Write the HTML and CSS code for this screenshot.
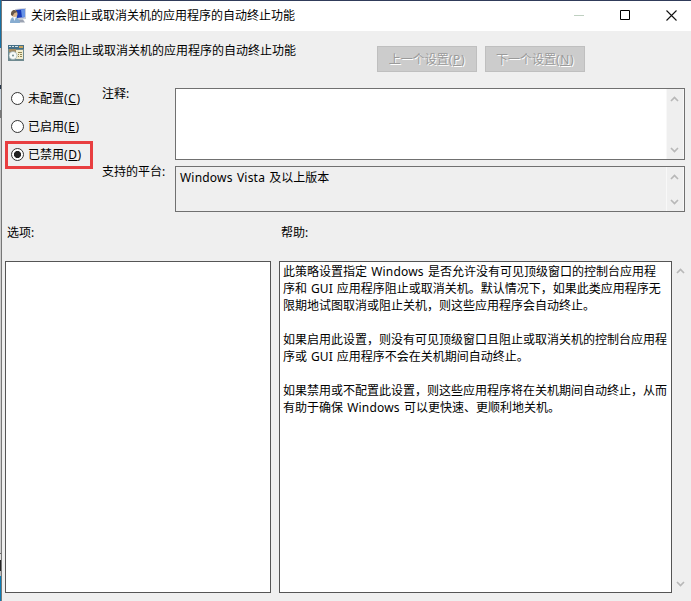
FILE: index.html
```html
<!DOCTYPE html>
<html lang="zh-CN">
<head>
<meta charset="utf-8">
<title>关闭会阻止或取消关机的应用程序的自动终止功能</title>
<link rel="stylesheet" href="styles.css">
</head>
<body>
<svg width="0" height="0" class="defs">
  <symbol id="up" viewBox="0 0 9 6"><path d="M1 5L4.500 1.500L8 5" fill="none" stroke="currentColor" stroke-width="1.700"/></symbol>
  <symbol id="down" viewBox="0 0 9 6"><path d="M1 1L4.500 4.500L8 1" fill="none" stroke="currentColor" stroke-width="1.700"/></symbol>
</svg>
<div class="screen">
  <div class="desktop-edge"></div>
  <main class="window">
    <header class="titlebar">
      <svg class="app-icon" width="18" height="16" viewBox="0 0 18 16">
        <path d="M5 1l11-1v11l-10 1z" fill="#c9cdd8"/>
        <path d="M6 2l9-1v8l-8 1z" fill="#1739b8"/>
        <path d="M11 1.500l4-.5v8l-3 .4z" fill="#6793e6"/>
        <path d="M9 11.500h4l2 3H9z" fill="#9ba3b2"/>
        <path d="M0 15c0-4 2-6 4-6s6 2 6 6z" fill="#87acd0"/>
        <path d="M3 9l1.500 4L6 9z" fill="#f2f5fa"/>
        <circle cx="4.500" cy="6" r="3" fill="#d9b58c"/>
        <path d="M1 7c-.5-6 5-6 6.500-3L4.500 5 2.500 8z" fill="#67574a"/>
      </svg>
      <h1 class="title">关闭会阻止或取消关机的应用程序的自动终止功能</h1>
      <div class="controls">
        <svg width="11" height="11" viewBox="0 0 11 11"><path d="M0 5.500h10" stroke="#bfd0c1"/></svg>
        <svg width="11" height="11" viewBox="0 0 11 11"><path d="M.5 .5h9v9h-9z" fill="none" stroke="#000"/></svg>
        <svg width="11" height="11" viewBox="0 0 11 11"><path d="M.5 .5l10 10M10.500 .5l-10 10" stroke="#111" stroke-width="1.100"/></svg>
      </div>
    </header>
    <section class="heading">
      <svg class="policy-icon" width="16" height="16" viewBox="0 0 16 16">
        <path d="M0 0h16v16H0z" fill="#6f8a90"/>
        <path d="M0 0h16v4H0z" fill="#456f86"/>
        <path d="M1 1.500h2m1 0h2m1 0h3" stroke="#d6e3e8"/>
        <path d="M11 1h4v2h-4z" fill="#c9a55c"/>
        <path d="M1 4h7v3H1z" fill="#a58c62"/>
        <path d="M8 5h7v9H8z" fill="#f3edcf"/>
        <path d="M10 7.500h4M10 9.500h1m1 0h2M10 11.500h1m1 0h2" stroke="#8d8452"/>
        <circle cx="5" cy="10.500" r="4" fill="#f7faf8" stroke="#8fa3a6" stroke-width=".6"/>
        <circle cx="5" cy="10.500" r="1" fill="#738d91"/>
      </svg>
      <h2 class="policy-name">关闭会阻止或取消关机的应用程序的自动终止功能</h2>
      <div class="nav">
        <button class="nav-button" disabled>上一个设置<span class="key">(<u>P</u>)</span></button>
        <button class="nav-button" disabled>下一个设置<span class="key">(<u>N</u>)</span></button>
      </div>
    </section>
    <section class="settings">
      <div class="choices">
        <label class="choice"><span class="radio"></span><span>未配置<span class="key">(<u>C</u>)</span></span></label>
        <label class="choice"><span class="radio"></span><span>已启用<span class="key">(<u>E</u>)</span></span></label>
        <label class="choice marked"><span class="radio checked"></span><span>已禁用<span class="key">(<u>D</u>)</span></span></label>
      </div>
      <div class="fields">
        <div class="field-label">注释:</div>
        <div class="box comment"><div class="box-text"></div><div class="scroll"><svg class="arrow"><use href="#up"/></svg><svg class="arrow"><use href="#down"/></svg></div></div>
        <div class="field-label">支持的平台:</div>
        <div class="box platform"><div class="box-text"><span class="latin">Windows Vista</span> 及以上版本</div><div class="scroll"><svg class="arrow"><use href="#up"/></svg><svg class="arrow"><use href="#down"/></svg></div></div>
      </div>
    </section>
    <section class="panes">
      <div class="pane-label">选项:</div>
      <div class="pane-label help-label">帮助:</div>
      <div></div>
      <div class="pane"></div>
      <div class="pane help"><p>此策略设置指定 <span class="latin">Windows</span> 是否允许没有可见顶级窗口的控制台应用程<br>序和 GUI 应用程序阻止或取消关机。默认情况下，如果此类应用程序无<br>限期地试图取消或阻止关机，则这些应用程序会自动终止。</p><p>如果启用此设置，则没有可见顶级窗口且阻止或取消关机的控制台应用程<br>序或 GUI 应用程序不会在关机期间自动终止。</p><p>如果禁用或不配置此设置，则这些应用程序将在关机期间自动终止，从而<br>有助于确保 <span class="latin">Windows</span> 可以更快速、更顺利地关机。</p></div>
      <div class="scroll outer"><svg class="arrow"><use href="#up"/></svg><svg class="arrow"><use href="#down"/></svg></div>
    </section>
  </main>
</div>
</body>
</html>
```
FILE: styles.css
```css
* { box-sizing: border-box; }
body {
  margin: 0;
  overflow: hidden;
  font: 12px/17px "Noto Sans", "Noto Sans CJK SC", sans-serif;
  color: #000;
}
h1, h2, p { margin: 0; font: inherit; }
svg { display: block; flex: none; }
.defs { display: none; }
u { text-underline-offset: 1px; text-decoration-thickness: 1px; }
.key { letter-spacing: .6px; }
.latin { letter-spacing: .2px; }
.screen {
  display: grid;
  grid-template-columns: 1px 690px;
  height: 601px;
}
.desktop-edge {
  background: linear-gradient(#1671a5 0 48px, #cfcfcf 48px 85px, #26364a 85px 89px, #c2cdd6 89px 110px, #777 110px 118px, #cfcfcf 118px 553px, #666 553px 554px, #ddd 554px 560px, #222 560px 571px, #bbb 571px 576px, #087bb4 576px);
}
.window {
  border-top: 1px solid #303b5a;
  border-left: 1px solid #777;
  background: #efefef;
}
.titlebar {
  display: flex;
  align-items: center;
  height: 30px;
  padding: 0 14px 0 8px;
  background: #fff;
}
.title { margin: -1px 0 0 3px; }
.controls {
  display: flex;
  gap: 35px;
  margin: -1px 0 0 auto;
}
.heading {
  display: flex;
  align-items: flex-start;
  height: 57px;
  padding: 14px 0 0 6px;
}
.policy-name { margin: -3px 0 0 8px; }
.nav {
  display: flex;
  gap: 8px;
  margin: 1px 106px 0 auto;
}
.nav-button {
  width: 100px;
  height: 26px;
  padding: 0;
  border: 1px solid #bfbfbf;
  background: #ccc;
  color: #9a9a9a;
  font: inherit;
  text-shadow: 1px 1px 0 #fff;
}
.settings {
  display: grid;
  grid-template-columns: 100px 583px;
  height: 124px;
}
.choices { margin-top: -4px; padding: 1px 0 0 3px; }
.choice {
  display: flex;
  align-items: center;
  gap: 4px;
  width: 88px;
  height: 28px;
  padding: 0 0 2px 6px;
}
.radio {
  flex: none;
  width: 13px;
  height: 13px;
  border: 1px solid #333;
  border-radius: 50%;
  background: #fff;
}
.checked { background: radial-gradient(circle, #222 0 3.200px, #fff 3.900px); }
.marked {
  padding-left: 3px;
  border: 3px solid #e83e40;
}
.fields {
  display: grid;
  grid-template-columns: 73px 510px;
  grid-template-rows: 72px 46px;
  row-gap: 6px;
}
.field-label { margin-top: -3px; }
.box {
  display: flex;
  border: 1px solid #707070;
}
.box-text { flex: 1; padding: 2px 4px; word-spacing: 1px; }
.comment .box-text { background: #fff; }
.scroll {
  display: flex;
  flex-direction: column;
  align-items: center;
  justify-content: space-between;
  width: 18px;
  padding: 7px 2px 6px 0;
  border-right: 1px solid #f8f8f8;
  border-left: 1px solid #f8f8f8;
  color: #b8b8b8;
}
.arrow { width: 9px; height: 6px; }
.panes {
  display: grid;
  grid-template-columns: 266px 393px 18px;
  grid-template-rows: 49px 332px;
  column-gap: 8px;
  padding-left: 3px;
}
.pane-label { padding: 12px 0 0 2px; }
.pane {
  border: 1px solid #555;
  background: #fff;
}
.help { padding: 1px 0 0 3px; white-space: nowrap; word-spacing: 1px; }
.help p + p { margin-top: 17px; }
.outer {
  width: 17px;
  margin-left: -8px;
  padding: 7px 0 6px;
  border: 0;
}
```
